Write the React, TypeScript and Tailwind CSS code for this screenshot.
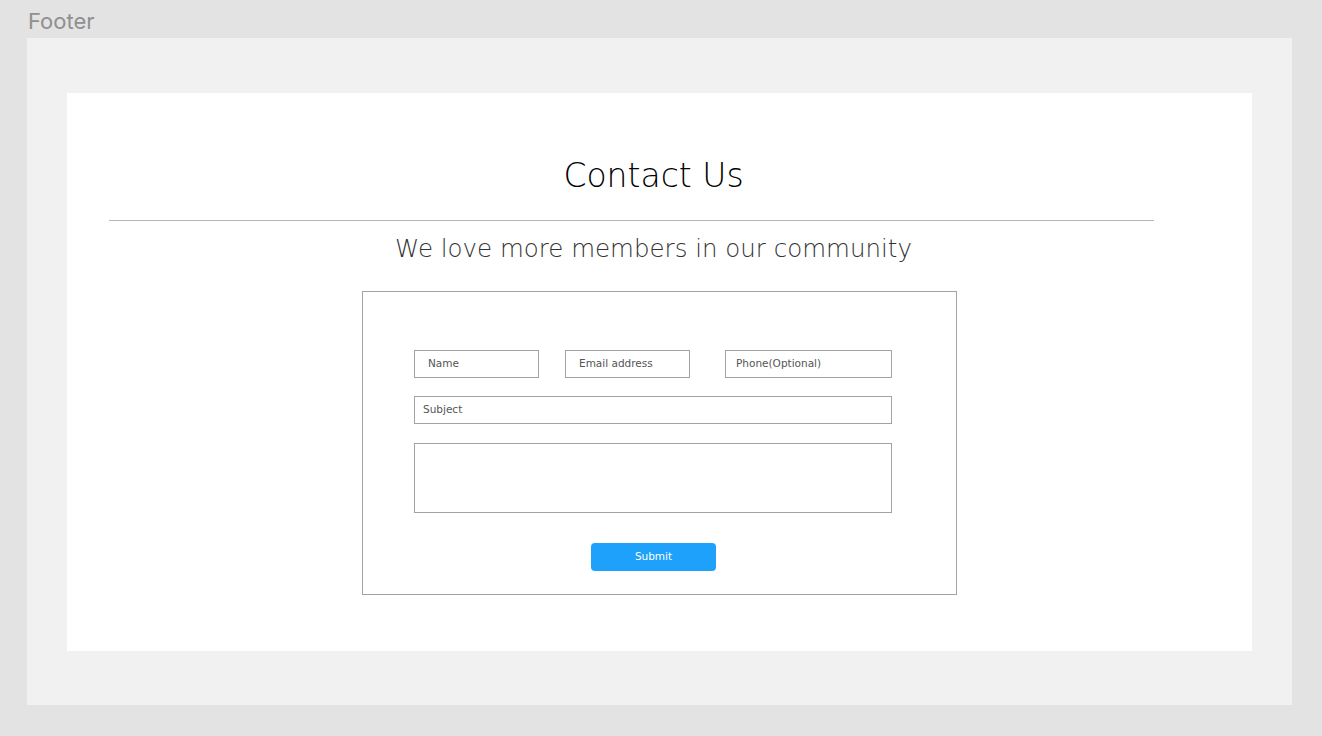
export default function App() {
  return (
    <div className="min-h-[736px] w-full bg-[#e3e3e3] font-['Inter','Liberation_Sans',sans-serif]">
      {/* label */}
      <div className="h-[38px] pl-[28px] pt-[8px] text-[22px] leading-[26px] text-[#8f8f8f]">Footer</div>

      {/* frame */}
      <div className="mx-[27px] mr-[30px] h-[667px] bg-[#f1f1f1] px-[40px] pt-[55px]">
        <div className="flex h-[558px] flex-col items-center bg-white font-['DejaVu_Sans',sans-serif]">
          <h1 className="mt-[64px] mr-[12px] h-[38px] text-[33px] leading-[38px] font-extralight text-black">Contact Us</h1>

          <div className="mt-[25px] ml-[42px] h-px w-[1045px] self-start bg-[#b5b5b5]" />

          <p className="mt-[13px] mr-[12px] text-[24.5px] leading-[30px] font-extralight text-[#333]">
            We love more members in our community
          </p>

          <div className="mt-[27px] flex h-[304px] w-[595px] flex-col border border-[#a3a3a3] pl-[51px] pt-[58px]">
            <div className="flex text-[10.5px] text-[#555]">
              <div className="flex h-[28px] w-[125px] items-center border border-[#a3a3a3] pl-[13px]">Name</div>
              <div className="ml-[26px] flex h-[28px] w-[125px] items-center border border-[#a3a3a3] pl-[13px]">Email address</div>
              <div className="ml-[35px] flex h-[28px] w-[167px] items-center border border-[#a3a3a3] pl-[10px]">Phone(Optional)</div>
            </div>
            <div className="mt-[18px] flex h-[28px] w-[478px] items-center border border-[#a3a3a3] pl-[8px] text-[10.5px] text-[#555]">
              Subject
            </div>
            <div className="mt-[19px] h-[70px] w-[478px] border border-[#a3a3a3]" />
            <button className="mt-[30px] ml-[177px] flex h-[28px] w-[125px] items-center justify-center rounded-[4px] bg-[#1da1fa] text-[10.5px] text-white">
              Submit
            </button>
          </div>
        </div>
      </div>
    </div>
  );
}
